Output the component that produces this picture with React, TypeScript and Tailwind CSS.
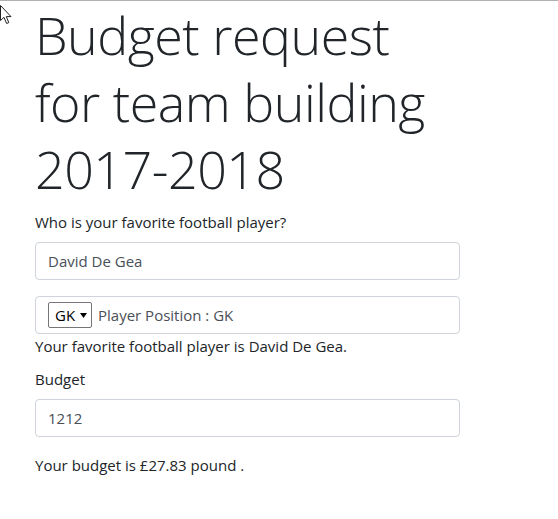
import React, { useState } from "react";

const rate = 0.02296;

const App: React.FC = () => {
  const [player, setPlayer] = useState<string>("David De Gea");
  const [position] = useState<string>("GK");
  const [budget, setBudget] = useState<string>("1212");

  const pounds = (Number(budget) * rate).toFixed(2);

  return (
    <div className="relative min-h-[519px] border-t border-[#b0b0b0] bg-white font-['Open_Sans',sans-serif] text-[#212529]">
      {/* mouse pointer left in the screenshot */}
      <svg
        className="absolute left-0 top-[4px]"
        width="13"
        height="20"
        viewBox="0 0 13 20"
      >
        <path
          d="M0.5 0.5 L0.5 15.5 L4 12.3 L6.6 18.5 L8.8 17.6 L6.3 11.6 L11 11.6 Z"
          fill="#fff"
          stroke="#222"
          strokeWidth="1"
          strokeLinejoin="round"
        />
      </svg>

      <div className="w-[460px] pl-[35px]">
        <h1 className="mb-2 text-[52px] font-light leading-[67px] tracking-[-0.5px]">
          Budget request
          <br />
          for team building
          <br />
          2017-2018
        </h1>

        <label className="mb-2 block text-[15px] leading-6">
          Who is your favorite football player?
        </label>
        <input
          type="text"
          value={player}
          onChange={(e) => setPlayer(e.target.value)}
          className="mb-4 block h-[38px] w-full rounded border border-[#ced4da] bg-white px-3 text-[15px] text-[#495057] outline-none"
        />

        <div className="flex h-[38px] w-full items-center rounded border border-[#ced4da] px-3 text-[15px] text-[#495057]">
          <span className="mr-[6px] flex h-[26px] w-[44px] items-center rounded-[2px] border border-[#767676] pl-[6px] text-black">
            {position}
            <svg className="ml-[5px]" width="7" height="5" viewBox="0 0 7 5">
              <path d="M0 0 H7 L3.5 5 Z" fill="#000" />
            </svg>
          </span>
          Player Position : {position}
        </div>
        <p className="mb-[9px] text-[15px] leading-6">
          Your favorite football player is {player}.
        </p>

        <label className="mb-2 block text-[15px] leading-6">Budget</label>
        <input
          type="text"
          value={budget}
          onChange={(e) => setBudget(e.target.value)}
          className="mb-4 block h-[38px] w-full rounded border border-[#ced4da] bg-white px-3 text-[15px] text-[#495057] outline-none"
        />
        <p className="text-[15px] leading-6">
          Your budget is £{pounds} pound .
        </p>
      </div>
    </div>
  );
};

export default App;
